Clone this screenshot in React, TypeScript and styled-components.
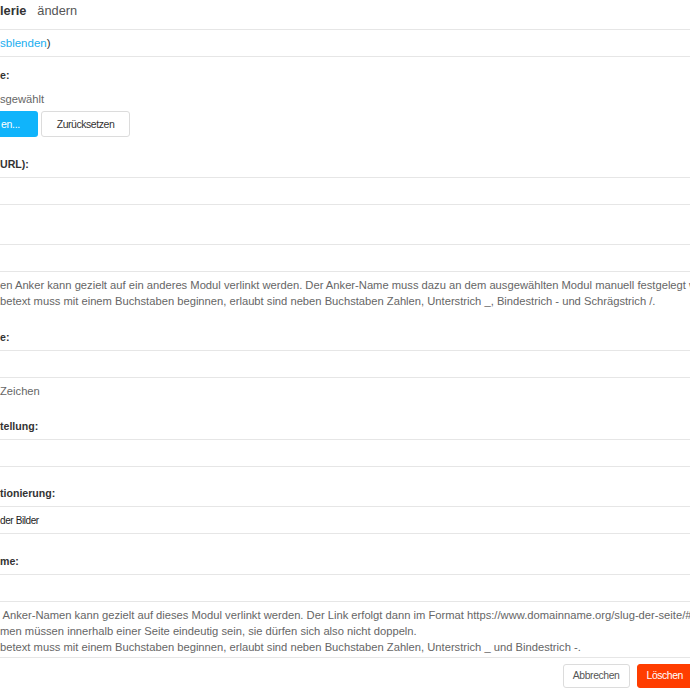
import styled, { createGlobalStyle } from "styled-components";

const GlobalStyle = createGlobalStyle`
	html, body {
		margin: 0;
		padding: 0;
		background: #ffffff;
		overflow: hidden;
	}
	body {
		font-family: "Liberation Sans", Arial, sans-serif;
		color: #333333;
	}
`;

const App = () => {
	return (<Viewport>
		<GlobalStyle />
		<Page>
			<Header>
				<strong>lerie</strong>
				<span>ändern</span>
			</Header>
			<ToggleRow>
				<a href="#">sblenden</a>)
			</ToggleRow>
			<Form>
				<Field>
					<Label>e:</Label>
					<Description>sgewählt</Description>
					<ButtonRow>
						<PickButton>en...</PickButton>
						<PlainButton>Zurücksetzen</PlainButton>
					</ButtonRow>
				</Field>
				<Field>
					<Label>URL):</Label>
					<Input type="text" />
				</Field>
				<Field>
					<Label>&nbsp;</Label>
					<Input type="text" />
					<Help>
						<p>en Anker kann gezielt auf ein anderes Modul verlinkt werden. Der Anker-Name muss dazu an dem ausgewählten Modul manuell festgelegt werden.</p>
						<p>betext muss mit einem Buchstaben beginnen, erlaubt sind neben Buchstaben Zahlen, Unterstrich _, Bindestrich - und Schrägstrich /.</p>
					</Help>
				</Field>
				<Field spaced>
					<Label>e:</Label>
					<Input type="text" />
					<Description hint>Zeichen</Description>
				</Field>
				<Field>
					<Label>tellung:</Label>
					<Input type="text" />
				</Field>
				<Field>
					<Label>tionierung:</Label>
					<Select>der Bilder</Select>
				</Field>
				<Field>
					<Label>me:</Label>
					<Input type="text" />
					<Help>
						<p>{" "}Anker-Namen kann gezielt auf dieses Modul verlinkt werden. Der Link erfolgt dann im Format https://www.domainname.org/slug-der-seite/#anker-name</p>
						<p>men müssen innerhalb einer Seite eindeutig sein, sie dürfen sich also nicht doppeln.</p>
						<p>betext muss mit einem Buchstaben beginnen, erlaubt sind neben Buchstaben Zahlen, Unterstrich _ und Bindestrich -.</p>
					</Help>
				</Field>
			</Form>
			<Footer>
				<FooterButton>Abbrechen</FooterButton>
				<FooterButton danger>Löschen</FooterButton>
			</Footer>
		</Page>
	</Viewport>);
};

const Viewport = styled.div`
	width: 690px;
	height: 690px;
	overflow: hidden;
`;

const Page = styled.div`
	width: 693px;
	display: flex;
	flex-direction: column;
`;

const Header = styled.div`
	box-sizing: content-box;
	padding-top: 4px;
	height: 25px;
	border-bottom: 1px solid #e6e6e6;
	font-size: 12.8px;
	line-height: 14px;
	display: flex;
	gap: 11px;

	strong {
		font-weight: bold;
		color: #333333;
	}

	span {
		color: #555555;
	}
`;

const ToggleRow = styled.div`
	height: 26px;
	display: flex;
	align-items: center;
	border-bottom: 1px solid #e6e6e6;
	font-size: 11.5px;
	color: #333333;

	a {
		color: #19aeef;
		text-decoration: none;
	}
`;

const Form = styled.div`
	padding-top: 10px;
	display: flex;
	flex-direction: column;
	gap: 18.5px;
`;

const Field = styled.div<{ spaced?: boolean }>`
	display: flex;
	flex-direction: column;
	${({ spaced }) => spaced && `margin-top: 1.5px;`}
`;

const Label = styled.label`
	display: block;
	font-size: 10.6px;
	line-height: 16px;
	font-weight: bold;
	color: #333333;
	margin-bottom: 5px;
	white-space: nowrap;
`;

const Description = styled.div<{ hint?: boolean }>`
	font-size: 11.2px;
	line-height: 16px;
	color: #666666;
	margin-top: ${({ hint }) => hint ? "5px" : "3px"};
`;

const ButtonRow = styled.div`
	display: flex;
	gap: 3px;
	margin-top: 4px;
`;

const PickButton = styled.button`
	width: 38px;
	height: 26px;
	padding: 0 0 0 1px;
	text-align: left;
	border: none;
	border-radius: 0 3px 3px 0;
	background-color: #10b4fb;
	color: #ffffff;
	font-family: "Liberation Sans", sans-serif;
	font-size: 10.5px;
	letter-spacing: -0.3px;
	cursor: pointer;
`;

const PlainButton = styled.button`
	width: 89px;
	height: 26px;
	padding: 0;
	border: 1px solid #dcdcdc;
	border-radius: 3px;
	background-color: #ffffff;
	color: #333333;
	font-family: "Liberation Sans", sans-serif;
	font-size: 10.5px;
	letter-spacing: -0.45px;
	cursor: pointer;
`;

const Input = styled.input`
	box-sizing: border-box;
	width: 100%;
	height: 28px;
	margin: 0;
	padding: 0 8px;
	border: 1px solid #e6e6e6;
	border-left: none;
	border-right: none;
	background: #ffffff;
	outline: none;
`;

const Select = styled.div`
	box-sizing: border-box;
	height: 28px;
	display: flex;
	align-items: center;
	border-top: 1px solid #e6e6e6;
	border-bottom: 1px solid #e6e6e6;
	font-family: "Liberation Sans", sans-serif;
	font-size: 10px;
	letter-spacing: -0.4px;
	color: #222222;
`;

const Help = styled.div`
	margin-top: 5px;
	font-size: 11.2px;
	line-height: 16px;
	color: #666666;

	p {
		margin: 0;
		white-space: pre;
	}
`;

const Footer = styled.div`
	margin-top: 2px;
	border-top: 1px solid #e6e6e6;
	padding-top: 6px;
	display: flex;
	justify-content: flex-end;
	gap: 7px;
`;

const FooterButton = styled.button<{ danger?: boolean }>`
	height: 24px;
	padding: 0 9px;
	border-radius: 3px;
	font-family: "Liberation Sans", sans-serif;
	font-size: 10.4px;
	letter-spacing: -0.4px;
	cursor: pointer;
	border: 1px solid #dcdcdc;
	background-color: #ffffff;
	color: #555555;

	${({ danger }) => danger && `
	border-color: #ff3d00;
	background-color: #ff3d00;
	color: #ffffff;
	`}
`;

export default App;
